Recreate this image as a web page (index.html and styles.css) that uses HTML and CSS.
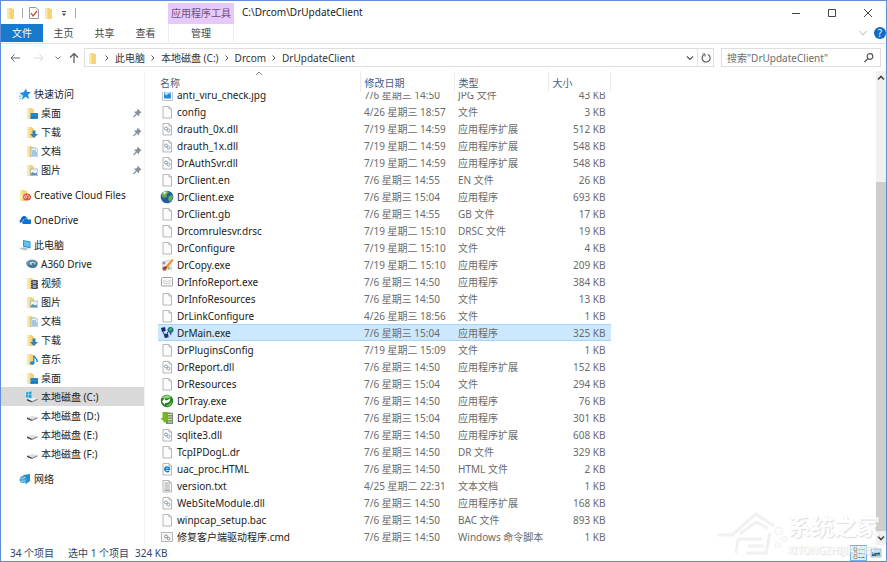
FILE: index.html
```html
<!DOCTYPE html>
<html lang="zh-CN">
<head>
<meta charset="utf-8">
<title>C:\Drcom\DrUpdateClient</title>
<link rel="stylesheet" href="styles.css">
</head>
<body>
<svg class="sprite" aria-hidden="true">
  <defs>
    <symbol id="folder" viewBox="0 0 12 12"><path d="M2 1h4.500l1 1H9v10H2z" fill="#f6d473"/><path d="M2 1h2.500v11H2z" fill="#fbe7a6"/></symbol>
    <symbol id="desktop" viewBox="0 0 12 12"><use href="#folder" x="-1"/><path d="M4.500 6H12v5.500H4.500z" fill="#1e88d2"/><path d="M4.500 10.500H12v1H4.500z" fill="#0b5d9e"/></symbol>
    <symbol id="download" viewBox="0 0 12 12"><use href="#folder" x="-1"/><path d="M6.500 4.500h3V8H12l-4 4-4-4h2.500z" fill="#2e7fc4"/></symbol>
    <symbol id="docs" viewBox="0 0 12 12"><use href="#folder" x="-1"/><path d="M5 3h5l2 2v7H5z" fill="#eaf3fb" stroke="#7ea6cc" stroke-width=".7"/><path d="M6 6h4M6 8h5M6 10h5" stroke="#4e90c9" stroke-width=".9"/></symbol>
    <symbol id="pics" viewBox="0 0 12 12"><use href="#folder" x="-1"/><path d="M4.500 5H12v6.500H4.500z" fill="#edf4f8" stroke="#93a9b8" stroke-width=".7"/><path d="M5 11V9.500l2-1.500 2 1.500 2-1v2.500z" fill="#5d92b8"/></symbol>
    <symbol id="video" viewBox="0 0 12 12"><use href="#folder" x="-1"/><path d="M5 3h7v9H5z" fill="#3d4350"/><path d="M6.800 4h3.400v3H6.800zM6.800 8h3.400v3H6.800z" fill="#91a6c5"/><path d="M5.800 3v9M11.300 3v9" stroke="#ddd" stroke-width=".7" stroke-dasharray="1 1"/></symbol>
    <symbol id="music" viewBox="0 0 12 12"><use href="#folder" x="-1"/><path d="M7.500 2.500c1 2.500 4.500 3 3.500 6.500" fill="none" stroke="#188ad8" stroke-width="1.500"/><path d="M7.800 3v7" stroke="#188ad8" stroke-width="1.300"/><ellipse cx="6.200" cy="10" rx="2.300" ry="1.800" fill="#188ad8"/></symbol>
    <symbol id="star" viewBox="0 0 12 12"><path d="M7 .5l1 3.500h4L9 6.700l1.200 4.300-3.700-2.200L2.800 12 4 7.500.5 5l4.200-.7z" fill="#1a8fe0"/><path d="M0 8.500l3-.8M0 11l2.500-1" stroke="#73bdf0"/></symbol>
    <symbol id="creative" viewBox="0 0 12 12"><use href="#folder" x="-1"/><ellipse cx="8" cy="8" rx="4" ry="3.600" fill="#e0523f"/><path d="M8 9L6.500 7.800M6.600 9.300a1.300 1.300 0 1 1 .9-2.200A1.500 1.500 0 1 1 9 9.400" fill="none" stroke="#fff" stroke-width=".7"/></symbol>
    <symbol id="onedrive" viewBox="0 0 12 12"><path d="M1.500 9A2 2 0 0 1 2 5.400 3 3 0 0 1 7.500 3.500 2 2 0 0 1 9 4L5 5z" fill="#0a62bd"/><path d="M4 10A2 2 0 0 1 4.500 6.500a2.600 2.600 0 0 1 4.800-.8A2 2 0 0 1 12 9.500l-.8.5z" fill="#1073d0"/></symbol>
    <symbol id="pc" viewBox="0 0 12 12"><path d="M4 1l7.500 1.500v7L4 7.500z" fill="#1f93db"/><path d="M4.700 2l6 1.300v4.800L5 6.700z" fill="#64c0f1"/><path d="M0 9.500L5 8l5 2-4 1.500z" fill="#b4c3cf"/></symbol>
    <symbol id="a360" viewBox="0 0 12 12"><ellipse cx="6" cy="5.500" rx="6" ry="4" fill="#7d9cae"/><ellipse cx="6.500" cy="6.500" rx="4.500" ry="3.500" fill="#3f7695"/><ellipse cx="6.500" cy="5.500" rx="3" ry="1.700" fill="#d3e8ee"/><ellipse cx="7" cy="6" rx="1.700" ry="1" fill="#316f97"/></symbol>
    <symbol id="drive" viewBox="0 0 12 12"><path d="M1 7.500l5 2 5.500-2.500v1.500L6 11 1 9z" fill="#8a8a8a"/><path d="M1 7.500l5-1.500 5.500 1L6 9.500z" fill="#dedede"/><path d="M1 7.500l4.500 1.900v1.400L1 9z" fill="#4a4a4a"/></symbol>
    <symbol id="sysdrive" viewBox="0 0 12 12"><path d="M1 8l5 2 5.500-2.500V9L6 11.500 1 9.500z" fill="#8a8a8a"/><path d="M2 8l4-1.500 5.500 1L6 10z" fill="#eee"/><path d="M1 8l4.500 1.900v1.400L1 9.500z" fill="#444"/><path d="M0 1.500l2.200-.4v2.500H0zM2.700 1L5.500.5v3.100H2.700zM0 4.100h2.200v2.500L0 6.200zM2.700 4.100h2.800v3.100l-2.800-.5z" fill="#18a8e2"/></symbol>
    <symbol id="network" viewBox="0 0 12 12"><path d="M4 2l7-1v7l-4 3z" fill="#278ccc"/><path d="M4 2l3 2v7L4 8z" fill="#58b6e8"/><circle cx="4" cy="6.500" r="3.500" fill="#4ba7d9"/><path d="M1 6c2-2 3 1 5-2M2 8.500c2-1 2 0 4-.5" stroke="#a7dced" fill="none"/></symbol>
    <symbol id="pin" viewBox="0 0 10 10"><path d="M5.500.5l4 4-1.200.5-1 1-.3 2.500L1.800 3.800l2.500-.3 1-1z" fill="#87919c"/><path d="M4.500 6L1.500 9" stroke="#87919c" stroke-width="1.200"/></symbol>
    <symbol id="file" viewBox="0 0 14 14"><path d="M3 1.500h6L11.500 4v9H3z" fill="#fcfcfc" stroke="#a5a5a5" stroke-width=".8"/><path d="M9 1.500V4h2.500" fill="none" stroke="#a5a5a5" stroke-width=".8"/></symbol>
    <symbol id="dll" viewBox="0 0 14 14"><use href="#file"/><g fill="none" stroke="#8ea0af" stroke-width="1"><circle cx="6" cy="6.500" r="1.500"/><circle cx="8.500" cy="8.500" r="1.500"/></g></symbol>
    <symbol id="text" viewBox="0 0 14 14"><use href="#file"/><path d="M4.500 4h4M4.500 6H10M4.500 8H10M4.500 10H10M4.500 11.500H10" stroke="#8f9aa3" stroke-width=".9"/></symbol>
    <symbol id="html" viewBox="0 0 14 14"><use href="#file"/><path d="M5 7.300h4.500c.2-3.200-4.700-3-4.700 0 0 2.700 3.200 3 4.400 1.500" fill="none" stroke="#1683d9" stroke-width="1.500"/></symbol>
    <symbol id="image" viewBox="0 0 14 14"><path d="M2.500 1.500h10v11h-10z" fill="#fff" stroke="#a8b7c4" stroke-width=".8"/><path d="M4 3h7v7.500H4z" fill="#268bd2"/><path d="M4.500 6l2 1.500L9 5l1.500 2V3.500h-6z" fill="#bce2fa"/></symbol>
    <symbol id="globe" viewBox="0 0 14 14"><circle cx="7" cy="7" r="6.300" fill="#205f99"/><path d="M2 3.500C5 0 8 1 9 2L6.500 5 7 7 4 8 1.500 6zM9 6l3.500-1c1 3-1 6-3 7L8 9z" fill="#68a957"/><path d="M3 2.500c2-1.500 3-1 4-.5L4 5z" fill="#d7e9b0"/></symbol>
    <symbol id="paint" viewBox="0 0 14 14"><path d="M2 4l8-2 2 9-9 2z" fill="#eee" stroke="#bbb" stroke-width=".6"/><circle cx="4" cy="5" r="1.500" fill="#aa85c9"/><circle cx="4.500" cy="10.500" r="2" fill="#c54338"/><circle cx="9" cy="10" r="1.300" fill="#9cc07c"/><path d="M5 9l7-8 1.500 1.300L7.300 10z" fill="#eb8f28"/><path d="M4 11l1-3 2.500 2z" fill="#744c25"/></symbol>
    <symbol id="window" viewBox="0 0 14 14"><rect x="1.500" y="2.500" width="11" height="8.500" rx="1" fill="#f8f8f8" stroke="#a2a2a2"/><path d="M4 5v3.500h6V5M4 5l3 2 3-2" fill="none" stroke="#c3c9ce" stroke-width=".8"/></symbol>
    <symbol id="main" viewBox="0 0 14 14"><path d="M1 2l4-1 .7 4L2 6z" fill="#172878"/><path d="M4 8l4-.7.7 4-4 .7z" fill="#253078"/><path d="M3 6l3 6M7 7l2-2" stroke="#273777"/><circle cx="10.500" cy="4" r="3" fill="#21728e"/><path d="M9 3l2-1 1 1-2 2z" fill="#6eb95c"/><path d="M9.500 7l2 0-.5 2.500z" fill="#26357a"/></symbol>
    <symbol id="tray" viewBox="0 0 14 14"><circle cx="7" cy="7" r="6.200" fill="#258526"/><path d="M2 4c3-4 8-3 9-1L7 4.500z" fill="#91d876"/><path d="M2 7.500l3-3.500v2.300c2.500 0 4-.5 5-2.300.8 3-1.500 5-5 5V11z" fill="#fff"/><path d="M7 11c2 0 4-2 5-4-.5 3-2 5-5 5z" fill="#91d876"/></symbol>
    <symbol id="update" viewBox="0 0 14 14"><path d="M6 1l7 1v11H6z" fill="#78906f"/><path d="M8 3.500h4M8 6h4M8 8.500h4M8 11h4" stroke="#d8e2cb"/><path d="M2.500 1h5v6h2L5 12 .5 7h2z" fill="#75b916"/></symbol>
    <symbol id="cmd" viewBox="0 0 14 14"><path d="M1.500 2.500h11v9h-11z" fill="#f6f6f6" stroke="#a6a6a6" stroke-width=".8"/><circle cx="6" cy="6.500" r="1.500" fill="none" stroke="#8495a3"/><circle cx="8.500" cy="8.500" r="1.300" fill="none" stroke="#8495a3"/></symbol>
    <symbol id="right" viewBox="0 0 8 8"><path d="M2.500 1.500L5 4 2.500 6.500" fill="none" stroke="currentColor"/></symbol>
    <symbol id="down" viewBox="0 0 10 10"><path d="M2.500 3.500L5 6l2.500-2.500" fill="none" stroke="currentColor"/></symbol>
  </defs>
</svg>

<div class="window">
  <header class="titlebar">
    <div class="quick">
      <svg class="ic12"><use href="#folder"/></svg>
      <span class="sep"></span>
      <button aria-label="属性"><svg class="ic12" viewBox="0 0 12 12"><path d="M1.500.5h6.500L10.500 3v8.500h-9z" fill="#fff" stroke="#999"/><path d="M3 6l2 3 4-5" fill="none" stroke="#cc4b35" stroke-width="1.300"/></svg></button>
      <button aria-label="新建文件夹"><svg class="ic12"><use href="#folder"/></svg></button>
      <button aria-label="自定义快速访问工具栏"><svg class="ic12" viewBox="0 0 12 12"><path d="M4 4.500h4" stroke="#444"/><path d="M4 6.500h4L6 9z" fill="#444"/></svg></button>
      <span class="sep"></span>
    </div>
    <div class="tool-title">应用程序工具</div>
    <h1 class="caption">C:\Drcom\DrUpdateClient</h1>
    <div class="controls">
      <button aria-label="最小化"><svg class="ic12" viewBox="0 0 12 12"><path d="M2 6.500h8" stroke="#444"/></svg></button>
      <button aria-label="最大化"><svg class="ic12" viewBox="0 0 12 12"><path d="M2.500 2.500h7v7h-7z" fill="none" stroke="#444"/></svg></button>
      <button aria-label="关闭"><svg class="ic12" viewBox="0 0 12 12"><path d="M2 2l8 8M10 2l-8 8" stroke="#444"/></svg></button>
    </div>
  </header>

  <nav class="tabs" aria-label="功能区">
    <button class="tab file-tab">文件</button>
    <button class="tab">主页</button>
    <button class="tab">共享</button>
    <button class="tab">查看</button>
    <button class="tab tool-tab">管理</button>
    <span class="grow"></span>
    <button class="expand" aria-label="展开功能区"><svg class="ic12" viewBox="0 0 12 12"><path d="M2.500 4L6 8l3.500-4" fill="none" stroke="#b5b5b5"/></svg></button>
    <button class="help" aria-label="帮助">?</button>
  </nav>

  <div class="location">
    <button class="go" aria-label="后退"><svg class="ic12" viewBox="0 0 12 12"><path d="M11 6H2M5.500 2.500L2 6l3.500 3.500" fill="none" stroke="#666"/></svg></button>
    <button class="go" aria-label="前进" disabled><svg class="ic12" viewBox="0 0 12 12"><path d="M1 6h9M6.500 2.500L10 6 6.500 9.500" fill="none" stroke="#d8d8d8"/></svg></button>
    <button class="recent" aria-label="最近位置"><svg class="ic10"><use href="#down"/></svg></button>
    <button class="up" aria-label="上移"><svg class="ic12" viewBox="0 0 12 12"><path d="M6 11V2M2 5.500L6 1.500l4 4" fill="none" stroke="#555" stroke-width="1.200"/></svg></button>
    <div class="address">
      <svg class="ic12"><use href="#folder"/></svg>
      <svg class="ic8"><use href="#right"/></svg><a href="#">此电脑</a>
      <svg class="ic8"><use href="#right"/></svg><a href="#">本地磁盘 (C:)</a>
      <svg class="ic8"><use href="#right"/></svg><a href="#">Drcom</a>
      <svg class="ic8"><use href="#right"/></svg><a href="#">DrUpdateClient</a>
      <span class="grow"></span>
      <button class="history" aria-label="历史"><svg class="ic12" viewBox="0 0 12 12"><path d="M3 4.500L6 7.500l3-3" fill="none" stroke="#555" stroke-width="1.200"/></svg></button>
      <button class="refresh" aria-label="刷新"><svg class="ic12" viewBox="0 0 12 12"><path d="M8 2.500A4 4 0 1 1 3.500 3" fill="none" stroke="#555" stroke-width="1.100"/><path d="M2.500 2h2.500v2.500" fill="none" stroke="#555"/></svg></button>
    </div>
    <label class="search">
      <input type="text" aria-label="搜索" placeholder='搜索"DrUpdateClient"'>
      <svg class="ic12" viewBox="0 0 12 12"><circle cx="7" cy="4.500" r="2.800" fill="none" stroke="#555" stroke-width="1.200"/><path d="M5 6.500L1.500 10" stroke="#555" stroke-width="1.300"/></svg>
    </label>
  </div>

  <div class="body">
    <nav class="tree" aria-label="导航窗格">
      <div class="group">
        <a href="#"><svg class="ic12"><use href="#star"/></svg>快速访问</a>
        <a href="#" class="sub"><svg class="ic12"><use href="#desktop"/></svg>桌面<svg class="ic10 pinned"><use href="#pin"/></svg></a>
        <a href="#" class="sub"><svg class="ic12"><use href="#download"/></svg>下载<svg class="ic10 pinned"><use href="#pin"/></svg></a>
        <a href="#" class="sub"><svg class="ic12"><use href="#docs"/></svg>文档<svg class="ic10 pinned"><use href="#pin"/></svg></a>
        <a href="#" class="sub"><svg class="ic12"><use href="#pics"/></svg>图片<svg class="ic10 pinned"><use href="#pin"/></svg></a>
      </div>
      <div class="group"><a href="#"><svg class="ic12"><use href="#creative"/></svg>Creative Cloud Files</a></div>
      <div class="group"><a href="#"><svg class="ic12"><use href="#onedrive"/></svg>OneDrive</a></div>
      <div class="group">
        <a href="#"><svg class="ic12"><use href="#pc"/></svg>此电脑</a>
        <a href="#" class="sub"><svg class="ic12"><use href="#a360"/></svg>A360 Drive</a>
        <a href="#" class="sub"><svg class="ic12"><use href="#video"/></svg>视频</a>
        <a href="#" class="sub"><svg class="ic12"><use href="#pics"/></svg>图片</a>
        <a href="#" class="sub"><svg class="ic12"><use href="#docs"/></svg>文档</a>
        <a href="#" class="sub"><svg class="ic12"><use href="#download"/></svg>下载</a>
        <a href="#" class="sub"><svg class="ic12"><use href="#music"/></svg>音乐</a>
        <a href="#" class="sub"><svg class="ic12"><use href="#desktop"/></svg>桌面</a>
        <a href="#" class="sub current"><svg class="ic12"><use href="#sysdrive"/></svg>本地磁盘 (C:)</a>
        <a href="#" class="sub"><svg class="ic12"><use href="#drive"/></svg>本地磁盘 (D:)</a>
        <a href="#" class="sub"><svg class="ic12"><use href="#drive"/></svg>本地磁盘 (E:)</a>
        <a href="#" class="sub"><svg class="ic12"><use href="#drive"/></svg>本地磁盘 (F:)</a>
      </div>
      <div class="group"><a href="#"><svg class="ic12"><use href="#network"/></svg>网络</a></div>
    </nav>

    <main class="files">
      <table>
        <colgroup><col class="c-name"><col class="c-date"><col class="c-type"><col class="c-size"></colgroup>
        <thead><tr><th>名称<svg class="sort" viewBox="0 0 8 5"><path d="M1 4l3-3 3 3" fill="none" stroke="#888"/></svg></th><th>修改日期</th><th>类型</th><th>大小</th></tr></thead>
        <tbody>
          <tr class="partial"><td><div><svg class="ic14"><use href="#image"/></svg>anti_viru_check.jpg</div></td><td><div>7/6 星期三 14:50</div></td><td><div>JPG 文件</div></td><td><div>43 KB</div></td></tr>
          <tr><td><div><svg class="ic14"><use href="#file"/></svg>config</div></td><td>4/26 星期三 18:57</td><td>文件</td><td>3 KB</td></tr>
          <tr><td><div><svg class="ic14"><use href="#dll"/></svg>drauth_0x.dll</div></td><td>7/19 星期二 14:59</td><td>应用程序扩展</td><td>512 KB</td></tr>
          <tr><td><div><svg class="ic14"><use href="#dll"/></svg>drauth_1x.dll</div></td><td>7/19 星期二 14:59</td><td>应用程序扩展</td><td>548 KB</td></tr>
          <tr><td><div><svg class="ic14"><use href="#dll"/></svg>DrAuthSvr.dll</div></td><td>7/19 星期二 14:59</td><td>应用程序扩展</td><td>548 KB</td></tr>
          <tr><td><div><svg class="ic14"><use href="#file"/></svg>DrClient.en</div></td><td>7/6 星期三 14:55</td><td>EN 文件</td><td>26 KB</td></tr>
          <tr><td><div><svg class="ic14"><use href="#globe"/></svg>DrClient.exe</div></td><td>7/6 星期三 15:04</td><td>应用程序</td><td>693 KB</td></tr>
          <tr><td><div><svg class="ic14"><use href="#file"/></svg>DrClient.gb</div></td><td>7/6 星期三 14:55</td><td>GB 文件</td><td>17 KB</td></tr>
          <tr><td><div><svg class="ic14"><use href="#file"/></svg>Drcomrulesvr.drsc</div></td><td>7/19 星期二 15:10</td><td>DRSC 文件</td><td>19 KB</td></tr>
          <tr><td><div><svg class="ic14"><use href="#file"/></svg>DrConfigure</div></td><td>7/19 星期二 15:10</td><td>文件</td><td>4 KB</td></tr>
          <tr><td><div><svg class="ic14"><use href="#paint"/></svg>DrCopy.exe</div></td><td>7/19 星期二 15:10</td><td>应用程序</td><td>209 KB</td></tr>
          <tr><td><div><svg class="ic14"><use href="#window"/></svg>DrInfoReport.exe</div></td><td>7/6 星期三 14:50</td><td>应用程序</td><td>384 KB</td></tr>
          <tr><td><div><svg class="ic14"><use href="#file"/></svg>DrInfoResources</div></td><td>7/6 星期三 14:50</td><td>文件</td><td>13 KB</td></tr>
          <tr><td><div><svg class="ic14"><use href="#file"/></svg>DrLinkConfigure</div></td><td>4/26 星期三 18:56</td><td>文件</td><td>1 KB</td></tr>
          <tr class="selected"><td><div><svg class="ic14"><use href="#main"/></svg>DrMain.exe</div></td><td>7/6 星期三 15:04</td><td>应用程序</td><td>325 KB</td></tr>
          <tr><td><div><svg class="ic14"><use href="#file"/></svg>DrPluginsConfig</div></td><td>7/19 星期二 15:09</td><td>文件</td><td>1 KB</td></tr>
          <tr><td><div><svg class="ic14"><use href="#dll"/></svg>DrReport.dll</div></td><td>7/6 星期三 14:50</td><td>应用程序扩展</td><td>152 KB</td></tr>
          <tr><td><div><svg class="ic14"><use href="#file"/></svg>DrResources</div></td><td>7/6 星期三 15:04</td><td>文件</td><td>294 KB</td></tr>
          <tr><td><div><svg class="ic14"><use href="#tray"/></svg>DrTray.exe</div></td><td>7/6 星期三 14:50</td><td>应用程序</td><td>76 KB</td></tr>
          <tr><td><div><svg class="ic14"><use href="#update"/></svg>DrUpdate.exe</div></td><td>7/6 星期三 15:04</td><td>应用程序</td><td>301 KB</td></tr>
          <tr><td><div><svg class="ic14"><use href="#dll"/></svg>sqlite3.dll</div></td><td>7/6 星期三 14:50</td><td>应用程序扩展</td><td>608 KB</td></tr>
          <tr><td><div><svg class="ic14"><use href="#file"/></svg>TcpIPDogL.dr</div></td><td>7/6 星期三 14:50</td><td>DR 文件</td><td>329 KB</td></tr>
          <tr><td><div><svg class="ic14"><use href="#html"/></svg>uac_proc.HTML</div></td><td>7/6 星期三 14:50</td><td>HTML 文件</td><td>2 KB</td></tr>
          <tr><td><div><svg class="ic14"><use href="#text"/></svg>version.txt</div></td><td>4/25 星期二 22:31</td><td>文本文档</td><td>1 KB</td></tr>
          <tr><td><div><svg class="ic14"><use href="#dll"/></svg>WebSiteModule.dll</div></td><td>7/6 星期三 14:50</td><td>应用程序扩展</td><td>168 KB</td></tr>
          <tr><td><div><svg class="ic14"><use href="#file"/></svg>winpcap_setup.bac</div></td><td>7/6 星期三 14:50</td><td>BAC 文件</td><td>893 KB</td></tr>
          <tr><td><div><svg class="ic14"><use href="#cmd"/></svg>修复客户端驱动程序.cmd</div></td><td>7/6 星期三 14:50</td><td>Windows 命令脚本</td><td>1 KB</td></tr>
        </tbody>
      </table>
    </main>

    <div class="scrollbar" aria-hidden="true">
      <svg class="ic10" viewBox="0 0 10 10"><path d="M2 6.500l3-3 3 3" fill="none" stroke="#444" stroke-width="1.600"/></svg>
      <div class="track"><div class="thumb"></div></div>
      <svg class="ic10" viewBox="0 0 10 10"><path d="M2 3.500l3 3 3-3" fill="none" stroke="#444" stroke-width="1.600"/></svg>
    </div>
  </div>

  <footer class="status">
    <span>34 个项目</span>
    <span>选中 1 个项目</span>
    <span class="size">324 KB</span>
    <span class="grow"></span>
    <button class="view on" aria-label="详细信息"><svg class="ic14" viewBox="0 0 14 14"><path d="M2 2h3v2.500H2zM2 6h3v2.500H2zM2 10h3v2.500H2z" fill="#fff" stroke="#a77b71" stroke-width=".8"/><path d="M6.500 3.500h2M9.500 3.500h3M6.500 7.500h2M9.500 7.500h3M6.500 11.500h2M9.500 11.500h3" stroke="#667b88"/></svg></button>
    <button class="view" aria-label="大图标"><svg class="ic14" viewBox="0 0 14 14"><path d="M2 3h10v8H2z" fill="#cfe4f4" stroke="#9caebb" stroke-width=".8"/><path d="M3 6l3 1 5-.5V10H3z" fill="#245f8c"/><path d="M7 8.500h4V10H7z" fill="#8fb89a"/></svg></button>
  </footer>

  <div class="watermark" aria-hidden="true">
    <svg class="house" viewBox="0 0 72 48"><g fill="none" stroke="#ececec" stroke-width="3"><path d="M2 26h14L40 5l18 12M24 25l16-12 12 6M22 30h24M20 44l2-14M30 44h20l4-20M32 37h16"/></g><g fill="#fafafa" stroke="#eee"><circle cx="63" cy="22" r="4"/><circle cx="68" cy="30" r="3"/><circle cx="62" cy="36" r="3"/></g></svg>
    <div class="brand"><span class="brand-name">系统之家</span><span class="brand-url">XITONGZHIJIA.NET</span></div>
  </div>
</div>
</body>
</html>
```
FILE: styles.css
```css
* { box-sizing: border-box; }

body {
  margin: 0;
  font: 10px/14px "Noto Sans", "Noto Sans CJK SC", sans-serif;
  color: #222;
  background: #fff;
}

button, input {
  font: inherit;
  color: inherit;
  padding: 0;
  border: 0;
  background: none;
}

button { display: flex; align-items: center; justify-content: center; }
a { color: inherit; text-decoration: none; }
svg { flex: none; display: block; }

.sprite { position: absolute; width: 0; height: 0; }
.ic8 { width: 8px; height: 8px; }
.ic10 { width: 10px; height: 10px; }
.ic12 { width: 12px; height: 12px; }
.ic14 { width: 14px; height: 14px; }
.grow { flex: 1; }

.window {
  position: relative;
  display: flex;
  flex-direction: column;
  height: 100vh;
  border: 1px solid #5f8fd8;
  overflow: hidden;
}

/* Title bar */
.titlebar { display: flex; height: 23px; }
.quick { display: flex; align-items: center; gap: 3px; width: 167px; padding-left: 4px; }
.sep { width: 1px; height: 10px; background: #aaa; }
.quick .sep { margin: 0 2px; }
.tool-title {
  width: 66px;
  margin-top: 2px;
  line-height: 21px;
  text-align: center;
  color: #6c4f78;
  background: #e6c9fa;
}
.caption { flex: 1; margin: 0; padding-left: 8px; font-size: 10px; font-weight: 400; line-height: 22px; }
.controls { display: flex; }
.controls button { width: 36px; }

/* Ribbon tabs */
.tabs { display: flex; height: 20px; border-bottom: 1px solid #e2e2e2; padding-bottom: 1px; }
.tab { width: 41px; color: #444; }
.file-tab { width: 42px; color: #fff; background: #1979ca; }
.tool-tab { width: 66px; margin-left: 2px; border: solid #eee; border-width: 0 1px; }
.expand { width: 16px; }
.help {
  align-self: center;
  width: 12px;
  height: 12px;
  margin-left: 3px;
  border-radius: 50%;
  color: #fff;
  background: #0c6cc4;
}

/* Address row */
.location { display: flex; height: 27px; padding: 4px 5px 4px 2px; }
.go { width: 24px; }
.recent { width: 13px; color: #777; }
.up { width: 20px; }
.address { display: flex; flex: 1; align-items: center; border: 1px solid #dedede; color: #333; }
.address .ic12 { margin: 0 2px; }
.address .ic8 { margin: 0 2px; color: #555; }
.address a { margin: 0 2px; }
.history { width: 14px; height: 100%; }
.refresh { width: 16px; height: 100%; border-left: 1px solid #e2e2e2; }
.search { display: flex; align-items: center; width: 160px; margin-left: 7px; padding: 0 5px; border: 1px solid #dedede; }
.search input { flex: 1; min-width: 0; outline: 0; }
.search input::placeholder { color: #6d6d6d; opacity: 1; }

/* Panes */
.body { display: flex; flex: 1; min-height: 0; }
.tree { width: 144px; padding-top: 13px; border-right: 1px solid #f3f3f3; }
.group { margin-bottom: 6px; }
.tree a { display: flex; align-items: center; gap: 3px; height: 19px; padding-left: 18px; white-space: nowrap; }
.tree .sub { padding-left: 25px; }
.tree .current { background: #d9d9d9; }
.tree .pinned { margin: 0 2px 0 auto; }

.files { flex: 1; min-width: 0; padding-left: 13px; overflow: hidden; }
table { width: 453px; table-layout: fixed; border-collapse: collapse; }
.c-name { width: 202px; }
.c-date, .c-type { width: 94px; }
th, td { padding: 0 4px; text-align: left; white-space: nowrap; }
th {
  position: relative;
  height: 21px;
  padding-top: 2px;
  border-right: 1px solid #ececec;
  font-weight: 400;
  color: #44607f;
}
th:first-child { padding-left: 2px; }
.sort { position: absolute; left: 50%; top: 0; margin-left: -4px; width: 8px; height: 5px; }
td { height: 17px; color: #6b6b6b; }
td:first-child { padding-left: 2px; color: #222; }
td:first-child div { display: flex; align-items: center; gap: 3px; height: 17px; }
td:last-child { padding-right: 5px; text-align: right; }
.partial td { height: 11px; vertical-align: bottom; }
.partial td div, .partial td:first-child div { display: flex; align-items: flex-end; height: 11px; padding-bottom: 1px; overflow: hidden; }
.partial td:last-child div { justify-content: flex-end; }
.selected td { background: #cce8ff; box-shadow: inset 0 1px #a8d5f7, inset 0 -1px #a8d5f7; }

.scrollbar { display: flex; flex-direction: column; width: 10px; background: #f0f0f0; }
.scrollbar svg { margin: 2px 0; }
.track { display: flex; flex-direction: column; flex: 1; padding-top: 97px; }
.thumb { flex: 1; background: #cdcdcd; }

/* Status bar */
.status { display: flex; align-items: center; height: 16px; padding: 0 2px 0 9px; color: #2b4668; }
.status span + span { margin-left: 14px; }
.status .size { margin-left: 6px; }
.view { width: 17px; height: 16px; }
.view.on { border: 1px solid #66b7e8; background: #d9f0fb; }

/* Watermark over the lower right corner */
.watermark {
  position: absolute;
  right: 6px;
  bottom: 4px;
  display: flex;
  align-items: center;
  opacity: .7;
  pointer-events: none;
}
.house { width: 72px; height: 48px; }
.brand { display: flex; flex-direction: column; color: #fff; text-shadow: 1px 1px 1px #ccc, 0 0 1px #ddd; }
.brand-name { font-size: 23px; line-height: 34px; font-weight: 700; }
.brand-url { line-height: 14px; }
```
